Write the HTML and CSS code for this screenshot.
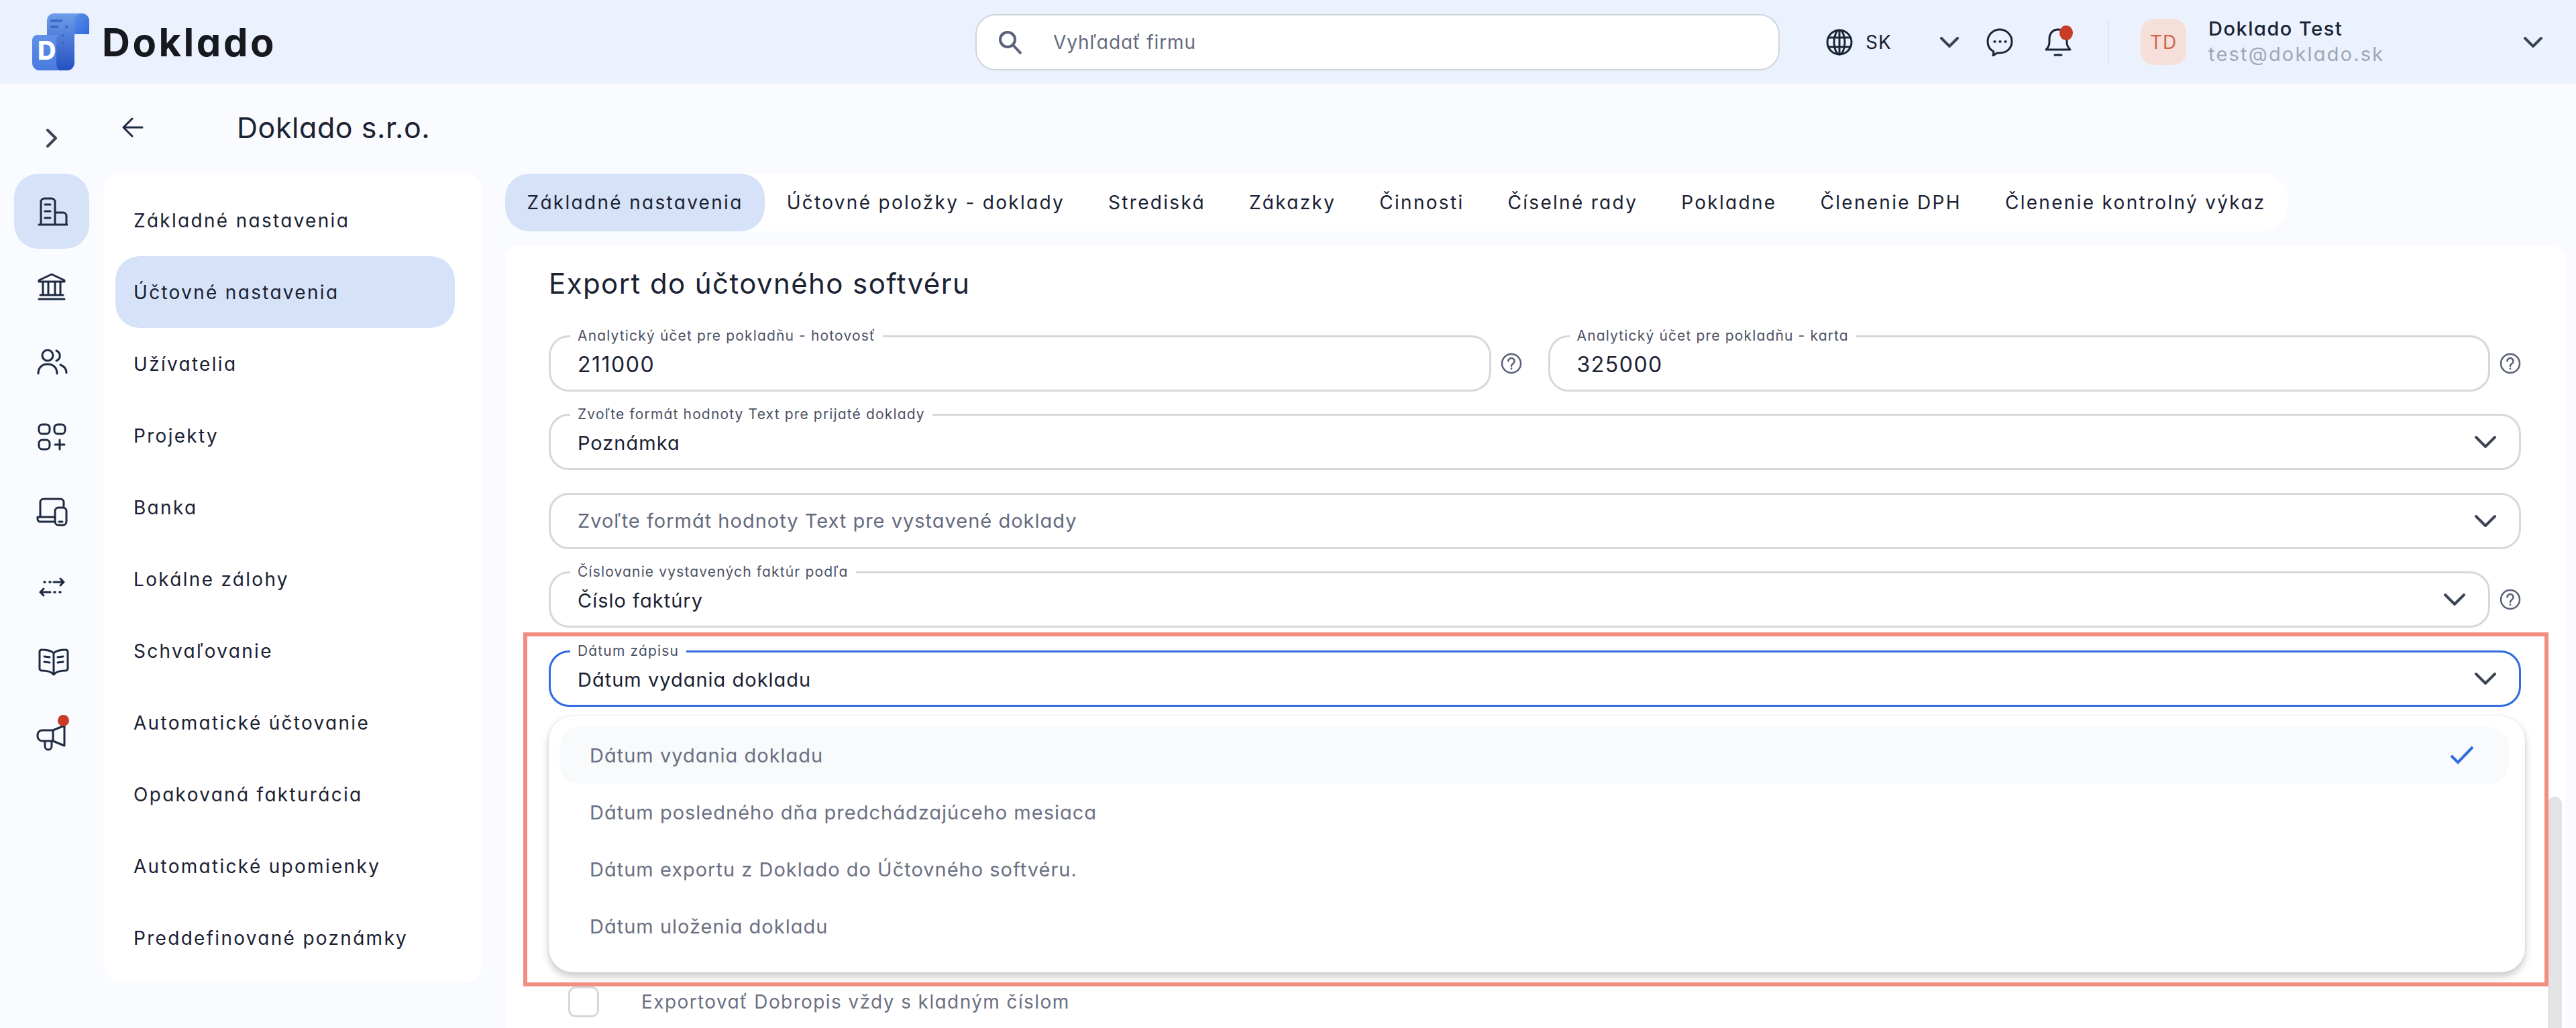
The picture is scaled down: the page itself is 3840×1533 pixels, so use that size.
FILE: index.html
```html
<!DOCTYPE html>
<html lang="sk">
<head>
    <meta charset="UTF-8">
    <meta name="viewport" content="width=device-width, initial-scale=1.0">
    <title>Doklado - Účtovné nastavenia</title>
    <link rel="stylesheet" href="styles.css">
</head>
<body>

<header class="topbar">
    <div class="brand">
        <svg class="logo" width="85" height="85" viewBox="0 0 85 85">
            <defs>
                <linearGradient id="logoRoll" x1="0" y1="0" x2="1" y2="1">
                    <stop offset="0" stop-color="#5f93ea"/>
                    <stop offset="1" stop-color="#3168dc"/>
                </linearGradient>
                <linearGradient id="logoSheet" x1="0" y1="0" x2="0" y2="1">
                    <stop offset="0" stop-color="#6f9de9"/>
                    <stop offset="1" stop-color="#2450c2"/>
                </linearGradient>
                <linearGradient id="logoTile" x1="0" y1="0" x2="0" y2="1">
                    <stop offset="0" stop-color="#5f8fe6"/>
                    <stop offset="1" stop-color="#4a7be0"/>
                </linearGradient>
            </defs>
            <path d="M60 0h14a11 11 0 0 1 11 11v20H60z" fill="url(#logoRoll)"/>
            <path d="M32 0h42c-7 0-11 5-11 12v62a11 11 0 0 1-11 11H32a10 10 0 0 1-10-10V10A10 10 0 0 1 32 0z" fill="url(#logoSheet)"/>
            <path d="M27 11h18M27 20h12M49 20h4M33 33h3M44 33h3M33 44h3M44 44h3M33 55h3M44 55h3M33 66h3M44 66h3" stroke="#3b68c8" stroke-width="3.5" fill="none"/>
            <path d="M8 32h33c-3 0-5 3-5 8v34c0 7 3 11 7 11H11A11 11 0 0 1 0 74V40a8 8 0 0 1 8-8z" fill="url(#logoTile)"/>
            <text class="logo-d" x="8" y="69">D</text>
        </svg>
        <span class="brand-name">Doklado</span>
    </div>

    <div class="search">
        <svg class="search-icon" width="36" height="36" viewBox="0 0 36 36">
            <circle cx="14" cy="14" r="11"/>
            <path d="M22 22l12 13"/>
        </svg>
        <span>Vyhľadať firmu</span>
    </div>

    <div class="lang">
        <svg class="head-icon" width="40" height="40" viewBox="0 0 40 40">
            <circle cx="20" cy="20" r="18"/>
            <ellipse cx="20" cy="20" rx="8" ry="18"/>
            <path d="M4 13h32M4 27h32M20 2v36"/>
        </svg>
        <span class="lang-code">SK</span>
    </div>
    <svg class="chevron lang-chevron" width="28" height="16" viewBox="0 0 28 16"><path d="M2 2l12 12L26 2"/></svg>

    <svg class="head-icon chat" width="40" height="42" viewBox="0 0 40 42">
        <path d="M20 2c10 0 18 8 18 18 0 10-8 17-18 17h-4l-6 4 1-6C5 32 2 26 2 20 2 10 10 2 20 2z"/>
        <path class="dots" d="M12 20h1M20 20h1M28 20h1"/>
    </svg>

    <div class="bell">
        <svg class="head-icon" width="44" height="44" viewBox="0 0 44 44">
            <path d="M3 33c3-3 5-6 5-11v-5C8 9 13 3 21 3s13 6 13 14v5c0 5 2 8 5 11z"/>
            <path d="M16 41h10"/>
        </svg>
        <span class="red-dot bell-dot"></span>
    </div>

    <div class="head-divider"></div>

    <div class="avatar">TD</div>
    <div class="user">
        <div class="user-name">Doklado Test</div>
        <div class="user-mail">test@doklado.sk</div>
    </div>
    <svg class="chevron user-chevron" width="28" height="16" viewBox="0 0 28 16"><path d="M2 2l12 12L26 2"/></svg>
</header>

<div class="layout">
    <nav class="rail">
        <div class="rail-toggle">
            <svg class="chevron" width="18" height="28" viewBox="0 0 18 28"><path d="M3 2l12 12L3 26"/></svg>
        </div>
        <div class="rail-item active">
            <svg class="rail-icon" width="48" height="48" viewBox="0 0 48 48">
                <path d="M5 44h42M8 44V10a5 5 0 0 1 5-5h11a5 5 0 0 1 5 5v34M29 26h12a5 5 0 0 1 5 5v13M14 14h8M14 24h8M14 34h8"/>
            </svg>
        </div>
        <div class="rail-item">
            <svg class="rail-icon" width="48" height="48" viewBox="0 0 48 48">
                <path d="M24 6L5 15v2h38v-2zM11 18v18M19 18v18M29 18v18M37 18v18M7 37h34M5 43h38"/>
            </svg>
        </div>
        <div class="rail-item">
            <svg class="rail-icon" width="48" height="48" viewBox="0 0 48 48">
                <circle cx="18" cy="15" r="8"/>
                <path d="M31 8a8 8 0 0 1 0 15M4 42c0-9 6-14 14-14s14 5 14 14M37 29c5 2 9 6 9 12"/>
            </svg>
        </div>
        <div class="rail-item">
            <svg class="rail-icon" width="48" height="48" viewBox="0 0 48 48">
                <rect x="5" y="6" width="16" height="14" rx="5"/>
                <rect x="28" y="6" width="16" height="14" rx="5"/>
                <rect x="5" y="29" width="16" height="14" rx="5"/>
                <path d="M36 29v14M29 36h14"/>
            </svg>
        </div>
        <div class="rail-item">
            <svg class="rail-icon" width="48" height="48" viewBox="0 0 48 48">
                <path d="M7 32V10a5 5 0 0 1 5-5h25a5 5 0 0 1 5 5v6M29 32H3v3a4 4 0 0 0 4 4h22"/>
                <rect x="29" y="18" width="17" height="26" rx="5"/>
                <path d="M35 39h5"/>
            </svg>
        </div>
        <div class="rail-item">
            <svg class="rail-icon thin" width="48" height="48" viewBox="0 0 48 48">
                <path d="M27 17h15M37 12l5 5-5 5M7 32h15M12 27l-5 5 5 5"/>
                <path class="dots" d="M13 17h1M21 17h1M28 32h1M36 32h1"/>
            </svg>
        </div>
        <div class="rail-item">
            <svg class="rail-icon wide" width="52" height="48" viewBox="0 0 52 48">
                <path d="M26 11C22 7 16 6 8 6a3 3 0 0 0-3 3v25a3 3 0 0 0 3 3c8 0 14 1 18 6 4-5 10-6 18-6a3 3 0 0 0 3-3V9a3 3 0 0 0-3-3c-8 0-14 1-18 5zM26 11v32M12 16l8 1M12 24l8 1M40 16l-8 1M40 24l-8 1"/>
            </svg>
        </div>
        <div class="rail-item promo">
            <svg class="rail-icon" width="52" height="48" viewBox="0 0 52 48">
                <path d="M3 21a7 7 0 0 1 7-7h16l17-7v30l-17-7H10a7 7 0 0 1-7-7zM26 14v16M14 30v8a5 5 0 0 0 10 0v-8"/>
            </svg>
            <span class="red-dot promo-dot"></span>
        </div>
    </nav>

    <div class="content">
        <div class="page-head">
            <svg class="back" width="32" height="30" viewBox="0 0 32 30"><path d="M30 15H3M15 2L2 15l13 13"/></svg>
            <h1>Doklado s.r.o.</h1>
        </div>

        <div class="page-body">
            <aside class="side-card">
                <a class="side-item">Základné nastavenia</a>
                <a class="side-item selected">Účtovné nastavenia</a>
                <a class="side-item">Užívatelia</a>
                <a class="side-item">Projekty</a>
                <a class="side-item">Banka</a>
                <a class="side-item">Lokálne zálohy</a>
                <a class="side-item">Schvaľovanie</a>
                <a class="side-item">Automatické účtovanie</a>
                <a class="side-item">Opakovaná fakturácia</a>
                <a class="side-item">Automatické upomienky</a>
                <a class="side-item">Preddefinované poznámky</a>
            </aside>

            <main class="main">
                <div class="tabs">
                    <button class="tab current">Základné nastavenia</button>
                    <button class="tab">Účtovné položky - doklady</button>
                    <button class="tab">Strediská</button>
                    <button class="tab">Zákazky</button>
                    <button class="tab">Činnosti</button>
                    <button class="tab">Číselné rady</button>
                    <button class="tab">Pokladne</button>
                    <button class="tab">Členenie DPH</button>
                    <button class="tab">Členenie kontrolný výkaz</button>
                </div>

                <section class="card">
                    <h2>Export do účtovného softvéru</h2>

                    <div class="two-cols">
                        <div class="with-help">
                            <div class="field">
                                <label>Analytický účet pre pokladňu - hotovosť</label>
                                <span class="value number">211000</span>
                            </div>
                            <svg class="help" width="32" height="32" viewBox="0 0 32 32"><circle cx="16" cy="16" r="14"/><path d="M11.5 12.5a4.5 4.5 0 1 1 6.8 3.9c-1.500.9-2.300 1.800-2.300 3.600M16 23.500v.5"/></svg>
                        </div>
                        <div class="with-help">
                            <div class="field">
                                <label>Analytický účet pre pokladňu - karta</label>
                                <span class="value number">325000</span>
                            </div>
                            <svg class="help" width="32" height="32" viewBox="0 0 32 32"><circle cx="16" cy="16" r="14"/><path d="M11.5 12.5a4.5 4.5 0 1 1 6.8 3.9c-1.500.9-2.300 1.800-2.300 3.600M16 23.500v.5"/></svg>
                        </div>
                    </div>

                    <div class="field">
                        <label>Zvoľte formát hodnoty Text pre prijaté doklady</label>
                        <span class="value">Poznámka</span>
                        <svg class="chevron" width="34" height="20" viewBox="0 0 34 20"><path d="M3 3l14 14L31 3"/></svg>
                    </div>

                    <div class="field">
                        <span class="value placeholder">Zvoľte formát hodnoty Text pre vystavené doklady</span>
                        <svg class="chevron" width="34" height="20" viewBox="0 0 34 20"><path d="M3 3l14 14L31 3"/></svg>
                    </div>

                    <div class="with-help">
                        <div class="field">
                            <label>Číslovanie vystavených faktúr podľa</label>
                            <span class="value">Číslo faktúry</span>
                            <svg class="chevron" width="34" height="20" viewBox="0 0 34 20"><path d="M3 3l14 14L31 3"/></svg>
                        </div>
                        <svg class="help" width="32" height="32" viewBox="0 0 32 32"><circle cx="16" cy="16" r="14"/><path d="M11.5 12.5a4.5 4.5 0 1 1 6.8 3.9c-1.500.9-2.300 1.800-2.300 3.600M16 23.500v.5"/></svg>
                    </div>

                    <div class="select-wrap">
                        <div class="field focused">
                            <label>Dátum zápisu</label>
                            <span class="value">Dátum vydania dokladu</span>
                            <svg class="chevron" width="34" height="20" viewBox="0 0 34 20"><path d="M3 3l14 14L31 3"/></svg>
                        </div>

                        <ul class="dropdown">
                            <li class="option hovered">
                                Dátum vydania dokladu
                                <svg class="check" width="36" height="28" viewBox="0 0 36 28"><path d="M2 15l10 10L34 2"/></svg>
                            </li>
                            <li class="option">Dátum posledného dňa predchádzajúceho mesiaca</li>
                            <li class="option">Dátum exportu z Doklado do Účtovného softvéru.</li>
                            <li class="option">Dátum uloženia dokladu</li>
                        </ul>

                        <div class="highlight"></div>
                    </div>

                    <div class="check-row">
                        <span class="checkbox"></span>
                        <span>Exportovať Dobropis vždy s kladným číslom</span>
                    </div>

                    <div class="scroll-thumb"></div>
                </section>
            </main>
        </div>
    </div>
</div>

</body>
</html>
```

FILE: styles.css
```css
* {
    box-sizing: border-box;
}
html, body {
    margin: 0;
    padding: 0;
    height: 1533px;
    overflow: hidden;
}
body {
    font-family: Inter, "Noto Sans", sans-serif;
    font-feature-settings: "cv11";
    background-color: #f9fbfe;
    color: #1a2233;
}

/* horni lista */
.topbar {
    display: flex;
    align-items: center;
    height: 125px;
    background: #ebf2fe;
    padding-left: 48px;
}
.brand {
    display: flex;
    align-items: center;
    width: 1406px;
}
.logo-d {
    font-family: Inter, sans-serif;
    font-weight: 800;
    font-size: 38px;
    fill: #fff;
}
.brand-name {
    font-size: 58px;
    font-weight: 700;
    letter-spacing: 3.5px;
    margin-left: 19px;
    color: #17191f;
}
.search {
    display: flex;
    align-items: center;
    width: 1199px;
    height: 84px;
    background: #fff;
    border: 2px solid #d0d3dc;
    border-radius: 30px;
    padding-left: 32px;
    font-size: 28px;
    letter-spacing: 0.9px;
    color: #646a7e;
}
.search span {
    margin-left: 46px;
}
.search-icon {
    fill: none;
    stroke: #5a6178;
    stroke-width: 4;
}
.lang {
    display: flex;
    align-items: center;
    margin-left: 69px;
}
.lang-code {
    font-size: 28px;
    margin-left: 19px;
    letter-spacing: 1px;
    width: 111px;
}
.head-icon {
    fill: none;
    stroke: #1b2436;
    stroke-width: 3;
    stroke-linecap: round;
    stroke-linejoin: round;
}
.chevron {
    fill: none;
    stroke: #3b4452;
    stroke-width: 4;
    stroke-linecap: round;
    stroke-linejoin: round;
    flex: none;
}
.chat {
    margin-left: 41px;
}
.dots {
    stroke-width: 3.5;
    stroke-linecap: round;
}
.bell {
    position: relative;
    height: 44px;
    margin-left: 46px;
}
.red-dot {
    position: absolute;
    background: #c93a27;
    border-radius: 50%;
}
.bell-dot {
    width: 20px;
    height: 22px;
    left: 23px;
    top: -3px;
}
.head-divider {
    width: 2px;
    height: 65px;
    background: #dde5f3;
    margin-left: 51px;
}
.avatar {
    display: flex;
    align-items: center;
    justify-content: center;
    width: 68px;
    height: 69px;
    margin-left: 47px;
    border-radius: 20px;
    background: #f6dfd8;
    color: #d0654a;
    font-size: 28px;
    letter-spacing: 1px;
}
.user {
    margin-left: 33px;
    width: 470px;
}
.user-name {
    font-size: 29px;
    font-weight: 500;
    letter-spacing: 1.5px;
    line-height: 38px;
    margin-top: -2px;
}
.user-mail {
    font-size: 29px;
    letter-spacing: 2.2px;
    line-height: 38px;
    color: #a0a6b4;
}

/* levy panel s ikonami */
.layout {
    display: flex;
}
.rail {
    width: 154px;
    flex: none;
}
.rail-toggle {
    display: flex;
    justify-content: center;
    align-items: center;
    height: 134px;
    padding-top: 27px;
}
.rail-item {
    position: relative;
    display: flex;
    align-items: center;
    justify-content: center;
    width: 112px;
    height: 112px;
    margin-left: 21px;
    border-radius: 36px;
}
.rail-item.active {
    background: #d6e2f8;
}
.rail-icon {
    fill: none;
    stroke: #1f2a40;
    stroke-width: 3;
    stroke-linecap: round;
    stroke-linejoin: round;
}
.rail-icon.wide {
    margin-left: 6px;
}
.promo .rail-icon {
    margin-left: 3px;
}
.promo-dot {
    width: 17px;
    height: 17px;
    left: 65px;
    top: 23px;
}

/* obsah */
.content {
    flex: 1;
    min-width: 0;
}
.page-head {
    display: flex;
    align-items: center;
    height: 132px;
}
.back {
    fill: none;
    stroke: #1f2a40;
    stroke-width: 3;
    stroke-linecap: round;
    stroke-linejoin: round;
    margin: -3px 0 0 28px;
}
h1 {
    font-size: 43px;
    font-weight: 400;
    letter-spacing: 0.55px;
    margin: -3px 0 0 139px;
}
.page-body {
    display: flex;
    gap: 33px;
}
.side-card {
    width: 566px;
    height: 1209px;
    flex: none;
    background: #fff;
    border-radius: 30px;
    padding: 18px 42px 0 18px;
}
.side-item {
    display: flex;
    align-items: center;
    height: 107px;
    padding-left: 27px;
    font-size: 28px;
    letter-spacing: 2.3px;
    border-radius: 36px;
}
.side-item.selected {
    background: #d6e2f8;
}
.main {
    flex: 1;
    min-width: 0;
    padding: 2px 16px 0 0;
}
.tabs {
    display: inline-flex;
    background: #fff;
    border-radius: 36px;
    height: 86px;
}
.tab {
    font: inherit;
    font-size: 28px;
    letter-spacing: 2.3px;
    color: inherit;
    background: none;
    border: none;
    border-radius: 36px;
    padding: 0 32.5px;
}
.tab.current {
    background: #d6e2f8;
}
.card {
    position: relative;
    margin-top: 21px;
    height: 1200px;
    background: #fff;
    border-radius: 20px 20px 0 0;
    padding: 33px 66px 0 65px;
}
h2 {
    font-size: 42px;
    font-weight: 400;
    letter-spacing: 1.4px;
    line-height: 48px;
    margin: 0 0 53px;
}
.two-cols {
    display: flex;
    gap: 39px;
}
.two-cols .with-help {
    flex: 1;
    min-width: 0;
}
.with-help {
    display: flex;
    align-items: center;
    gap: 14px;
}
.with-help .field {
    flex: 1;
    min-width: 0;
}
.help {
    flex: none;
    fill: none;
    stroke: #5a6178;
    stroke-width: 2.5;
    stroke-linecap: round;
}
.card > .field,
.card > .with-help,
.select-wrap {
    margin-top: 33.5px;
}
.card > .two-cols + .field {
    margin-top: 33px;
}
.field {
    position: relative;
    display: flex;
    align-items: center;
    justify-content: space-between;
    height: 84px;
    border: 3px solid #d6d8de;
    border-radius: 30px;
    padding: 0 33px 0 40px;
}
.field label {
    position: absolute;
    top: -15px;
    left: 29px;
    padding: 0 11px;
    background: #fff;
    font-size: 21px;
    line-height: 26px;
    letter-spacing: 1.15px;
    color: #4b5163;
}
.value {
    font-size: 29px;
    letter-spacing: 1px;
    padding-top: 3px;
}
.value.number {
    font-size: 32px;
    letter-spacing: 1.5px;
}
.placeholder {
    color: #646a7e;
    padding-top: 0;
}
.field.focused {
    border-color: #2f6be0;
}

/* otevreny select */
.select-wrap {
    position: relative;
}
.dropdown {
    position: absolute;
    z-index: 5;
    left: 0;
    right: -6px;
    top: 98px;
    height: 382px;
    margin: 0;
    padding: 16px 24px 0 16px;
    list-style: none;
    background: #fff;
    border-radius: 36px;
    box-shadow: 0 0 2px rgba(0, 0, 0, 0.12), 0 6px 12px rgba(0, 0, 0, 0.22);
}
.option {
    display: flex;
    align-items: center;
    justify-content: space-between;
    height: 85px;
    padding: 0 52px 0 45px;
    border-radius: 30px;
    font-size: 29px;
    letter-spacing: 1px;
    color: #6b7083;
}
.option.hovered {
    background: #f8fafc;
}
.check {
    fill: none;
    stroke: #2f6be0;
    stroke-width: 4;
}
.highlight {
    position: absolute;
    z-index: 6;
    left: -38px;
    right: -41px;
    top: -27px;
    height: 528px;
    border: 6px solid #f38d80;
    pointer-events: none;
}
.check-row {
    display: flex;
    align-items: center;
    margin: 417px 0 0 29px;
    font-size: 28px;
    letter-spacing: 1.4px;
    color: #6b7083;
}
.checkbox {
    width: 46px;
    height: 46px;
    border: 3px solid #d6d8de;
    border-radius: 11px;
    margin-right: 63px;
    flex: none;
}
.scroll-thumb {
    position: absolute;
    top: 822px;
    right: 5px;
    width: 21px;
    height: 400px;
    background: #e3e3e3;
    border-radius: 10px 10px 0 0;
}
```
